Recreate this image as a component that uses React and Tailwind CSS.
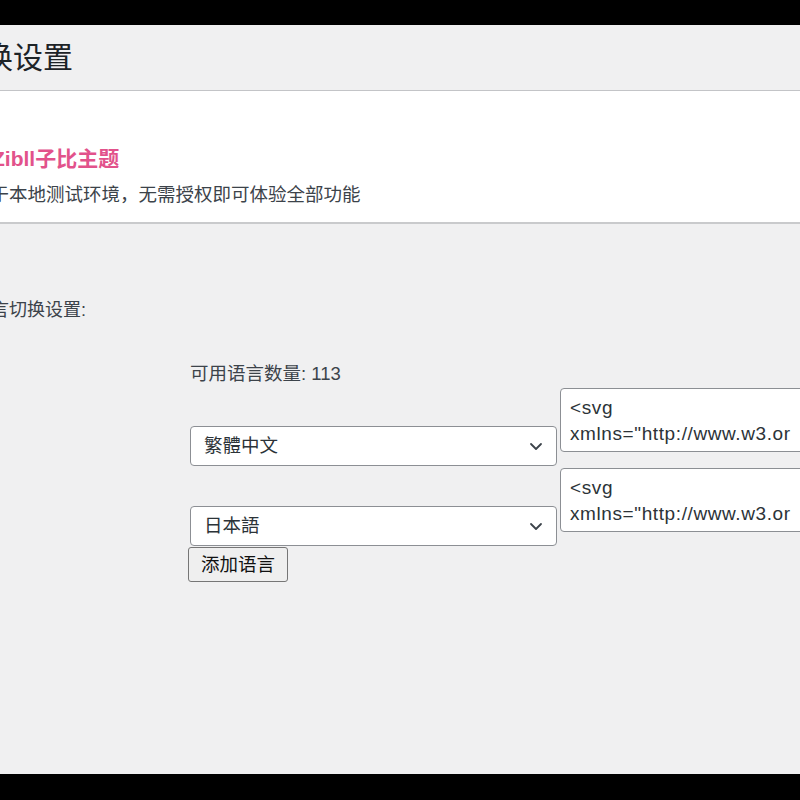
import React from 'react';

const font = { fontFamily: '"Liberation Sans", "Noto Sans CJK SC", sans-serif' };

function Chevron() {
  return (
    <svg className="w-[16px] h-[16px] text-[#3c434a]" viewBox="0 0 16 16" fill="none" stroke="currentColor" strokeWidth="1.8" strokeLinecap="round" strokeLinejoin="round">
      <path d="M3 6l5 5 5-5" />
    </svg>
  );
}

function LangRow({ label }) {
  return (
    <div className="flex items-start gap-[3px]">
      <div className="mt-[38px] w-[367px] h-[40px] shrink-0 flex items-center justify-between pl-[13px] pr-[12px] bg-white border border-[#8c8f94] rounded-[4px] text-[18.5px] text-[#2c3338]">
        <span>{label}</span>
        <Chevron />
      </div>
      <div className="relative w-[245px] h-[64px] shrink-0 bg-white border border-[#8c8f94] rounded-[4px] pl-[9px] pt-[6px] text-[19px] tracking-[0.6px] leading-[26px] text-[#2c3338] overflow-hidden">
        <div>&lt;svg</div>
        <div className="whitespace-nowrap">xmlns="http://www.w3.or</div>
      </div>
    </div>
  );
}

export default function App() {
  return (
    <div className="min-h-screen bg-black flex flex-col" style={font}>
      <div className="h-[25px] bg-black" />
      <div className="h-[749px] bg-[#f0f0f1] overflow-hidden flex flex-col">
        <div className="h-[66px] shrink-0 flex items-center border-b border-[#c3c4c7]">
          <h1 className="-ml-[47px] text-[30px] text-[#1d2327] leading-none whitespace-nowrap">切换设置</h1>
        </div>
        <div className="h-[133px] shrink-0 bg-white border-b-2 border-[#c9cacc] flex flex-col">
          <div className="mt-[54px] -ml-[8px] text-[21px] leading-[28px] font-bold text-[#e2528b] whitespace-nowrap">Zibll子比主题</div>
          <div className="mt-[9px] -ml-[28px] text-[18.5px] leading-[26px] text-[#3c434a] whitespace-nowrap">用于本地测试环境，无需授权即可体验全部功能</div>
        </div>
        <div className="mt-[74px] -ml-[27px] text-[18px] leading-[24px] text-[#3c434a] whitespace-nowrap">语言切换设置:</div>
        <div className="ml-[190px] mt-[40px] flex flex-col">
          <div className="text-[18.5px] leading-[24px] text-[#3c434a]">可用语言数量: 113</div>
          <div className="mt-[2px] flex flex-col gap-[2px]">
            <LangRow label="繁體中文" />
            <LangRow label="日本語" />
          </div>
          <button className="-ml-[2px] mt-[1px] w-[100px] h-[35px] bg-[#efefef] border border-[#767676] rounded-[3px] text-[18.5px] text-[#111] flex items-center justify-center">
            添加语言
          </button>
        </div>
      </div>
      <div className="flex-1 bg-black" />
    </div>
  );
}
